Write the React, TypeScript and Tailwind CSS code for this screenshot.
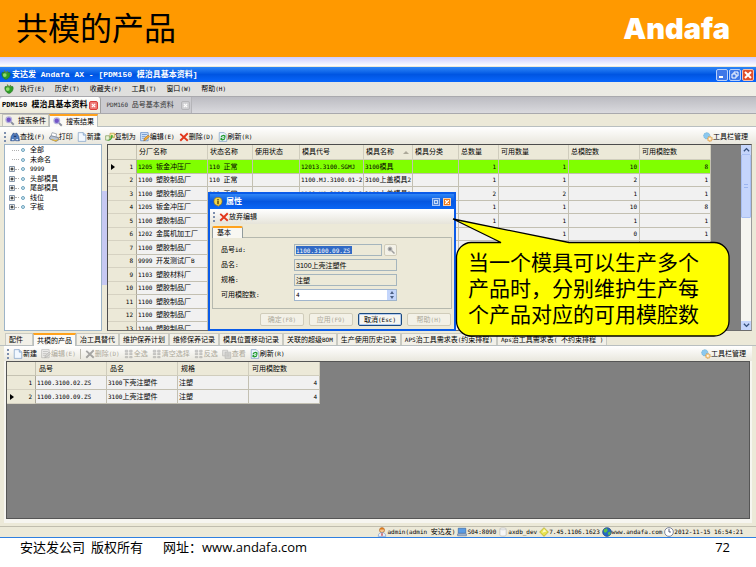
import React from 'react';

const latinSizes = {
  small: "font-['DejaVu_Sans_Mono',monospace] text-[6px]",
  tab: "font-['Liberation_Mono',monospace] text-[7px]",
  title: "font-['Liberation_Mono',monospace] text-[8px]",
};

/** Text that mixes Chinese with half-width Latin characters. */
function T({ children, latin = 'small' }: { children: string; latin?: keyof typeof latinSizes }) {
  const parts = children.split(/([\x20-\x7e]+)/).filter(Boolean);
  return (
    <span className="whitespace-pre">
      {parts.map((p, i) =>
        /^[\x20-\x7e]+$/.test(p) ? (
          <span key={i} className={latinSizes[latin]}>{p}</span>
        ) : (
          p
        ),
      )}
    </span>
  );
}

type IconName =
  | 'apple' | 'search' | 'find' | 'print' | 'page' | 'copy' | 'edit' | 'delete' | 'refresh'
  | 'gear' | 'grid' | 'sheets' | 'user' | 'pc' | 'db' | 'diamond' | 'globe' | 'clock' | 'info';

const drawings: Record<IconName, React.ReactNode> = {
  apple: (
    <>
      <path d="M2 4h12c2 4-1 10-6 11C3 14 0 8 2 4z" fill="#2e9e28" stroke="#2a6f26" />
      <path d="M5 1l3 4 3-3" stroke="#5b8f3a" strokeWidth="2" fill="none" />
      <ellipse cx="6" cy="8" rx="3" ry="3" fill="#8fdc6c" />
    </>
  ),
  search: (
    <>
      <path d="M9 9l5 5" stroke="#8a8f9c" strokeWidth="3" />
      <circle cx="6" cy="6" r="4.5" fill="#7355c8" stroke="#b4b2dd" strokeWidth="2" />
    </>
  ),
  find: (
    <>
      <path d="M1 14l1-7 3-5h2v12zM9 14V2h2l3 5 1 7z" fill="#4d7fc4" stroke="#1d3c78" />
      <path d="M6 7h4" stroke="#1d3c78" strokeWidth="2" />
      <path d="M3 12h3M10 12h3" stroke="#d8e8ff" strokeWidth="2" />
    </>
  ),
  print: (
    <>
      <path d="M5 1l7 2-1 6-8-2z" fill="#fff" stroke="#7c8796" />
      <path d="M1 8l3-2 11 3v4l-4 2-10-4z" fill="#b7c3d4" stroke="#56647a" />
      <path d="M4 12l7 2 3-2" stroke="#e0b13a" strokeWidth="2" fill="none" />
    </>
  ),
  page: (
    <>
      <path d="M2 1h8l4 4v10H2z" fill="#f2f8ff" stroke="#6f93bf" />
      <path d="M10 1v4h4" fill="#c9dcf4" stroke="#6f93bf" />
    </>
  ),
  copy: (
    <>
      <path d="M1 6h6v7H1z" fill="#eaf3d8" stroke="#6f8f45" />
      <path d="M8 2h7v7H8z" fill="#fff4b8" stroke="#b08b28" />
      <path d="M3 13c3 0 6-2 7-6l-2 1 3-4 3 4-2-1c-1 5-4 8-9 6z" fill="#3fa834" />
    </>
  ),
  edit: (
    <>
      <path d="M1 1h12v13H1z" fill="#dbe9fb" stroke="#3d74bd" />
      <path d="M3 4h8M3 7h6M3 10h4" stroke="#3d74bd" />
      <path d="M6 14l1-4 6-5 2 2-6 6z" fill="#f2b33a" stroke="#a4621c" />
    </>
  ),
  delete: <path d="M2 3l12 11M14 2L2 14" stroke="#e2371c" strokeWidth="3" fill="none" />,
  refresh: (
    <>
      <path d="M2 1h8l4 4v10H2z" fill="#eef6ff" stroke="#6f93bf" />
      <path d="M5 8c1-3 5-3 6-1M11 10c-1 3-5 3-6 1" stroke="#1f9a2c" strokeWidth="2" fill="none" />
      <path d="M12 5v4H8zM4 13V9h4z" fill="#1f9a2c" />
    </>
  ),
  gear: (
    <>
      <circle cx="6" cy="6" r="5" fill="#8cc8ee" stroke="#5ba6d2" strokeDasharray="2 1" />
      <circle cx="11" cy="11" r="4" fill="#f3c887" stroke="#cf8d35" strokeDasharray="2 1" />
      <circle cx="11" cy="11" r="1.5" fill="#fff" />
    </>
  ),
  grid: (
    <path
      d="M2 2h4v3H2zM9 2h4v3H9zM2 7h4v2H2zM9 7h4v2H9zM2 12h4v2H2zM9 12h4v2H9z"
      fill="#a8a8a8"
      stroke="#777"
    />
  ),
  sheets: (
    <>
      <path d="M1 2h8v9H1z" fill="#d0d0d0" stroke="#777" />
      <path d="M5 5h9v10H5z" fill="#bbb" stroke="#777" />
      <path d="M7 8h5M7 11h5" stroke="#777" />
    </>
  ),
  user: (
    <>
      <circle cx="8" cy="5" r="4" fill="#f6c690" stroke="#a0561c" />
      <path d="M4 4c1-4 7-4 8 0z" fill="#d9791c" />
      <path d="M2 15c0-5 3-6 6-6s6 1 6 6z" fill="#e9f0fb" stroke="#6f8fc2" />
      <path d="M8 10v4" stroke="#c33" strokeWidth="2" />
    </>
  ),
  pc: (
    <>
      <path d="M2 2h12v8H2z" fill="#5a9be4" stroke="#31609c" />
      <path d="M1 11h14v3H1z" fill="#b9c8dc" stroke="#4d6c96" />
    </>
  ),
  db: (
    <>
      <path d="M3 3c0-2 10-2 10 0v10c0 2-10 2-10 0z" fill="#f7f7f7" stroke="#b4b4b4" />
      <path d="M3 3c0 2 10 2 10 0" stroke="#c4c4c4" />
    </>
  ),
  diamond: (
    <>
      <path d="M8 1l7 7-7 7-7-7z" fill="#e8e24e" stroke="#a69d1b" />
      <path d="M8 3l4 4-7 2z" fill="#fbfac0" />
    </>
  ),
  globe: (
    <>
      <circle cx="8" cy="8" r="7" fill="#2569c4" stroke="#173f7c" />
      <path d="M3 4l5-2 1 4-3 3-3-1zM9 9l4-2 1 3-3 4z" fill="#5cc046" />
    </>
  ),
  clock: (
    <>
      <circle cx="8" cy="8" r="7" fill="#fff" stroke="#77809a" strokeWidth="1.5" />
      <path d="M8 3v5h3" stroke="#4a5270" strokeWidth="1.5" fill="none" />
    </>
  ),
  info: (
    <>
      <circle cx="8" cy="7" r="6.5" fill="#f2d54b" stroke="#8d6b0d" />
      <path d="M7 11l1 5 3-5z" fill="#e0b72c" />
      <path d="M8 3v2M8 6v5" stroke="#3c3104" strokeWidth="2" />
    </>
  ),
};

function Icon({ name, off = false }: { name: IconName; off?: boolean }) {
  return (
    <svg
      viewBox="0 0 16 16"
      aria-hidden="true"
      className={off ? 'size-[10px] shrink-0 opacity-50 grayscale' : 'size-[10px] shrink-0'}
      fill="none"
    >
      {drawings[name]}
    </svg>
  );
}

function ToolButton({ icon, label, off = false }: { icon: IconName; label: string; off?: boolean }) {
  return (
    <button
      disabled={off}
      className={off ? 'flex items-center text-[#aca899]' : 'flex items-center text-black'}
    >
      <Icon name={icon} off={off} />
      <T>{label}</T>
    </button>
  );
}

function Grip() {
  return <span className="h-[10px] w-0 shrink-0 border-l-2 border-dotted border-[#7d8fae]" />;
}

const menus = ['执行(E)', '历史(T)', '收藏夹(F)', '工具(T)', '窗口(W)', '帮助(H)'];

const treeItems: { label: string; open: boolean }[] = [
  { label: '全部', open: false },
  { label: '未命名', open: false },
  { label: '9999', open: true },
  { label: '头部模具', open: true },
  { label: '尾部模具', open: true },
  { label: '线位', open: true },
  { label: '字板', open: true },
];

const moldHeads = ['分厂名称', '状态名称', '使用状态', '模具代号', '模具名称', '模具分类', '总数量', '可用数量', '总模腔数', '可用模腔数'];

const P = '1100 塑胶制品厂';
const moldRows: string[][] = [
  ['1205 钣金冲压厂', '110 正常', '', '12013.3100.SGMJ', '3100模具', '', '1', '1', '10', '8'],
  [P, '110 正常', '', '1100.MJ.3100.01-2', '3100上盖模具2', '', '1', '1', '2', '1'],
  [P, '110 正常', '', '1100.MJ.3100.01-2', '3100上盖模具2', '', '2', '2', '1', '1'],
  ['1205 钣金冲压厂', '', '', '', '', '', '1', '1', '10', '8'],
  [P, '', '', '', '', '', '1', '1', '1', '1'],
  ['1202 金属机加工厂', '', '', '', '', '', '1', '1', '0', '1'],
  [P, '', '', '', '', '', '', '', '', ''],
  ['9999 开发测试厂B', '', '', '', '', '', '', '', '', ''],
  ['1103 塑胶材料厂', '', '', '', '', '', '', '', '', ''],
  [P, '', '', '', '', '', '', '', '', ''],
  [P, '', '', '', '', '', '', '', '', ''],
  [P, '', '', '', '', '', '', '', '', ''],
  [P, '', '', '', '', '', '', '', '', ''],
];

const lowerTabs = [
  '配件', '共模的产品', '冶工具替代', '维护保养计划', '维修保养记录', '模具位置移动记录',
  '关联的超级BOM', '生产使用历史记录', 'APS治工具需求表(约束排程)', 'Aps治工具需求表( 不约束排程 )',
];

const statusItems: { icon: IconName; label: string }[] = [
  { icon: 'user', label: 'admin(admin 安达发)' },
  { icon: 'pc', label: 'S04:8090' },
  { icon: 'db', label: 'axdb_dev' },
  { icon: 'diamond', label: '7.45.1106.1623' },
  { icon: 'globe', label: 'www.andafa.com' },
  { icon: 'clock', label: '2012-11-15 16:54:21' },
];

function RowHead({ n, current }: { n: number; current: boolean }) {
  return (
    <th scope="row" className="border-r border-b border-r-[#aca899] border-b-[#d6d2c2] bg-[#ece9d8] p-0 font-normal">
      <span className="flex items-center justify-between pr-[3px] pl-[3px]">
        <span className={current ? 'h-[6px] w-0 border-y-[3px] border-l-[4px] border-y-transparent border-l-black' : 'w-0'} />
        <T>{String(n)}</T>
      </span>
    </th>
  );
}

function MoldTable() {
  return (
    <table className="w-[603px] shrink-0 table-fixed border-separate border-spacing-0 self-start text-left">
      <colgroup>
        <col className="w-[29px]" />
        <col className="w-[71px]" />
        <col className="w-[45px]" />
        <col className="w-[47px]" />
        <col className="w-[64px]" />
        <col className="w-[49px]" />
        <col className="w-[46px]" />
        <col className="w-[40px]" />
        <col className="w-[70px]" />
        <col className="w-[71px]" />
        <col className="w-[71px]" />
      </colgroup>
      <thead>
        <tr className="h-[15px] bg-[#ece9d8]">
          <th className="border-r border-b border-[#c5c2b2] p-0" />
          {moldHeads.map((h) => (
            <th key={h} className="border-r border-b border-[#d0cdbd] p-0 pl-[2px] font-normal">
              <span className="flex items-center justify-between pr-[3px]">
                {h}
                {h === '模具名称' && (
                  <span className="border-x-[3px] border-b-[3px] border-x-transparent border-b-[#aca899]" />
                )}
              </span>
            </th>
          ))}
        </tr>
      </thead>
      <tbody>
        {moldRows.map((r, i) => (
          <tr key={i} className={i === 0 ? 'h-[14px] bg-[#80ff00]' : 'h-[13px] bg-[#f1f1f1] odd:h-[14px]'}>
            <RowHead n={i + 1} current={i === 0} />
            {r.map((c, j) => (
              <td
                key={j}
                className={
                  j > 5
                    ? 'border-r border-b border-[#c3c0b2] p-0 pr-[2px] text-right'
                    : 'border-r border-b border-[#c3c0b2] p-0 pl-px whitespace-nowrap'
                }
              >
                <T>{c}</T>
              </td>
            ))}
          </tr>
        ))}
      </tbody>
    </table>
  );
}

function ProductTable() {
  const rows = [
    ['1100.3100.02.ZS', '3100下壳注塑件', '注塑', '4'],
    ['1100.3100.09.ZS', '3100上壳注塑件', '注塑', '4'],
  ];
  return (
    <table className="w-[313px] table-fixed border-separate border-spacing-0 text-left">
      <colgroup>
        <col className="w-[29px]" />
        <col className="w-[71px]" />
        <col className="w-[71px]" />
        <col className="w-[71px]" />
        <col className="w-[71px]" />
      </colgroup>
      <thead>
        <tr className="h-[14px] bg-[#ece9d8]">
          <th className="border-r border-b border-[#c5c2b2] p-0" />
          {['品号', '品名', '规格', '可用模腔数'].map((h) => (
            <th key={h} className="border-r border-b border-[#d0cdbd] p-0 pl-[3px] font-normal">{h}</th>
          ))}
        </tr>
      </thead>
      <tbody>
        {rows.map((r, i) => (
          <tr key={i} className="h-[14px] bg-[#f1f1f1]">
            <RowHead n={i + 1} current={i === 1} />
            {r.map((c, j) => (
              <td
                key={j}
                className={
                  j === 3
                    ? 'border-r border-b border-[#c3c0b2] p-0 pr-[2px] text-right'
                    : 'border-r border-b border-[#c3c0b2] p-0 pl-px'
                }
              >
                <T>{c}</T>
              </td>
            ))}
          </tr>
        ))}
      </tbody>
    </table>
  );
}

function DialogButton({ label, active = false }: { label: string; active?: boolean }) {
  return (
    <button
      disabled={!active}
      className={
        active
          ? 'h-[13px] w-11 rounded-[2px] border border-[#1c4a80] bg-[#f6f5f0] text-black shadow-[inset_0_0_0_1px_#b5cdf0]'
          : 'h-[13px] w-11 rounded-[2px] border border-[#d0ccba] bg-[#f3f1e7] text-[#aca899]'
      }
    >
      <T>{label}</T>
    </button>
  );
}

function PropertyDialog() {
  return (
    <section
      aria-label="属性"
      className="absolute top-[126px] left-[208px] flex w-[248px] flex-col border-2 border-[#0a5be8] bg-[#ece9d8]"
    >
      <header className="flex h-[15px] items-center gap-[3px] bg-linear-to-b from-[#2f86f6] via-[#0556e0] to-[#0a66f5] px-[3px] text-[8px] font-bold text-white">
        <Icon name="info" />
        <span className="flex-1">属性</span>
        <button aria-label="最大化" className="grid size-2 place-items-center border border-[#a9c6f5] bg-[#4a83dc]">
          <span className="size-1 border border-[#c7dcfb]" />
        </button>
        <button aria-label="关闭" className="grid size-2 place-items-center border border-[#fbd0a8] bg-[#ee7a1c]">
          <svg viewBox="0 0 6 6" className="size-1"><path d="M0 0l6 6M6 0L0 6" stroke="#fff" strokeWidth="2" /></svg>
        </button>
      </header>
      <div className="flex h-[15px] items-center gap-1 bg-linear-to-b from-white to-[#e6e4da] px-[3px]">
        <Grip />
        <ToolButton icon="delete" label="放弃编辑" />
      </div>
      <div className="px-[2px] pt-[2px]">
        <button className="relative z-10 -mb-px block h-3 w-[31px] rounded-t-[2px] border border-t-2 border-b-0 border-[#919b9c] border-t-[#ffa21c] bg-[#f8f7f2] pl-1 text-left">
          基本
        </button>
        <div className="flex h-[72px] flex-col gap-[3px] border border-[#b5b8ae] px-2 pt-[6px]">
          <div className="flex h-3 items-center">
            <label htmlFor="pid" className="w-[73px]"><T>品号id:</T></label>
            <input
              id="pid"
              readOnly
              defaultValue="1100.3100.09.ZS"
              className="h-3 w-[88px] border border-[#a5b5bd] bg-[#ece9d8] bg-[linear-gradient(#316ac5,#316ac5)] bg-[length:56px_8px] bg-[position:1px_1px] bg-no-repeat pl-px font-['DejaVu_Sans_Mono',monospace] text-[6px] text-white outline-none"
            />
            <button aria-label="查找品号" className="ml-[2px] grid h-3 w-[13px] place-items-center rounded-[2px] border border-[#d0ccba] bg-[#f3f1e7]">
              <svg viewBox="0 0 16 16" className="size-2"><path d="M9 9l6 6" stroke="#a0a0a0" strokeWidth="3" /><circle cx="6" cy="6" r="4" fill="#888" stroke="#b8b8b8" strokeWidth="2" /></svg>
            </button>
          </div>
          <div className="flex h-3 items-center">
            <label htmlFor="pname" className="w-[73px]"><T>品名:</T></label>
            <input id="pname" readOnly defaultValue="3100上壳注塑件" className="h-3 w-[103px] border border-[#a5b5bd] bg-[#ece9d8] pl-px outline-none" />
          </div>
          <div className="flex h-3 items-center">
            <label htmlFor="pspec" className="w-[73px]"><T>规格:</T></label>
            <input id="pspec" readOnly defaultValue="注塑" className="h-3 w-[103px] border border-[#a5b5bd] bg-[#ece9d8] pl-px outline-none" />
          </div>
          <div className="flex h-3 items-center">
            <label htmlFor="pcount" className="w-[73px]"><T>可用模腔数:</T></label>
            <span className="flex h-3 w-[103px] border border-[#9fb4cc] bg-white">
              <input id="pcount" defaultValue="4" className="w-0 flex-1 bg-white pl-px font-['DejaVu_Sans_Mono',monospace] text-[6px] outline-none" />
              <span className="flex w-[9px] flex-col items-center justify-center gap-[2px] bg-[#c3d5fb]">
                <button aria-label="增加" className="border-x-[2px] border-b-[3px] border-x-transparent border-b-[#4d6185]" />
                <button aria-label="减少" className="border-x-[2px] border-t-[3px] border-x-transparent border-t-[#4d6185]" />
              </span>
            </span>
          </div>
        </div>
      </div>
      <footer className="flex justify-end gap-[5px] px-[3px] pt-[4px] pb-[3px]">
        <DialogButton label="确定(F8)" />
        <DialogButton label="应用(F9)" />
        <DialogButton label="取消(Esc)" active />
        <DialogButton label="帮助(H)" />
      </footer>
    </section>
  );
}

function Callout() {
  return (
    <aside className="absolute top-[152px] left-[452px] h-[120px] w-[279px] text-black">
      <svg viewBox="0 0 279 120" className="absolute inset-0 size-full" aria-hidden="true">
        <path
          d="M1 1L49 24.500H19A15 15 0 0 0 4.500 39V103A15 15 0 0 0 19 118H262A15 15 0 0 0 277 103V39A15 15 0 0 0 262 24.500H117Z"
          fill="#ffff00"
          stroke="#000"
          strokeWidth="1.300"
        />
      </svg>
      <p className="relative pt-8 pl-4 text-[21px] leading-[26px] whitespace-nowrap">
        当一个模具可以生产多个
        <br />
        产品时，分别维护生产每
        <br />
        个产品对应的可用模腔数
      </p>
    </aside>
  );
}

function WindowControls() {
  return (
    <div className="flex gap-px">
      <button aria-label="最小化" className="flex size-3 items-end rounded-[2px] border border-[#b9d0fa] bg-[#3f78e8] p-[2px]">
        <span className="h-[2px] w-1 bg-white" />
      </button>
      <button aria-label="还原" className="grid size-3 place-items-center rounded-[2px] border border-[#b9d0fa] bg-[#3f78e8]">
        <svg viewBox="0 0 8 8" className="size-2" fill="none" stroke="#fff"><path d="M3 3V1h4v4H5M1 3h4v4H1z" /></svg>
      </button>
      <button aria-label="关闭" className="grid size-3 place-items-center rounded-[2px] border border-[#f3c0b0] bg-[#e0502c]">
        <svg viewBox="0 0 8 8" className="size-2" stroke="#fff" strokeWidth="2"><path d="M1 1l6 6M7 1L1 7" /></svg>
      </button>
    </div>
  );
}

function CloseMark({ active }: { active: boolean }) {
  return (
    <button
      aria-label="关闭标签"
      className={
        active
          ? 'grid size-[9px] place-items-center rounded-[2px] border border-[#d8403c] bg-[#ee7a76]'
          : 'grid size-[9px] place-items-center rounded-[2px] border border-[#b5b5b8] bg-[#cfcfd2]'
      }
    >
      <svg viewBox="0 0 6 6" className="size-[5px]" stroke="#fff" strokeWidth="1.500"><path d="M1 1l4 4M5 1L1 5" /></svg>
    </button>
  );
}

function AppWindow() {
  return (
    <section className="relative flex flex-1 flex-col bg-[#ece9d8] text-[7px] leading-[10px] text-black">
      <header className="mt-px flex h-[15px] items-center gap-px bg-linear-to-b from-[#2d86f8] via-[#0055e2] to-[#0a66fb] pr-[2px] pl-px font-bold text-white">
        <Icon name="apple" />
        <h2 className="flex-1 text-[8px]"><T latin="title">安达发 Andafa AX - [PDM150 模治具基本资料]</T></h2>
        <WindowControls />
      </header>

      <nav className="flex h-[14px] items-center gap-[10px] bg-linear-to-r from-[#dcdcdc] to-[#f0efe6] pl-1">
        <Icon name="apple" />
        {menus.map((m) => (
          <button key={m} className="first-of-type:-ml-1"><T>{m}</T></button>
        ))}
      </nav>

      <div className="flex h-[18px] items-stretch border-y border-[#a9a9ad] bg-linear-to-b from-[#bcbcc2] to-[#dadade]">
        <div className="flex items-center gap-[2px] rounded-t-[3px] border-r border-[#a0a0a0] bg-linear-to-b from-white to-[#ece9d8] px-[2px] text-[8px] font-bold">
          <button><T latin="tab">PDM150 模治具基本资料</T></button>
          <CloseMark active />
        </div>
        <div className="flex items-center gap-[7px] border-r border-[#b5b5b9] bg-[#cbcbd0] pr-px pl-[5px] text-[#333]">
          <button><T>PDM160 品号基本资料</T></button>
          <CloseMark active={false} />
        </div>
      </div>

      <div className="flex h-[13px] items-end border-b border-[#b9bfc0] pl-[2px]">
        <button className="flex h-3 items-center gap-[3px] border-x border-t border-[#c4c4ba] bg-[#f2f0e6] px-[2px]">
          <Icon name="search" />
          搜索条件
        </button>
        <button className="-mb-px flex h-[13px] items-center gap-[3px] border-x border-t-2 border-[#b9bfc0] border-t-[#ffa21c] bg-[#fbfaf7] px-[3px]">
          <Icon name="search" />
          搜索结果
        </button>
      </div>

      <div className="flex h-[17px] items-center gap-1 bg-linear-to-b from-white to-[#e9e7dd] pt-[2px] pr-2 pl-1">
        <Grip />
        <ToolButton icon="find" label="查找(F)" />
        <ToolButton icon="print" label="打印" />
        <ToolButton icon="page" label="新建" />
        <ToolButton icon="copy" label="复制为" />
        <ToolButton icon="edit" label="编辑(E)" />
        <ToolButton icon="delete" label="删除(D)" />
        <ToolButton icon="refresh" label="刷新(R)" />
        <span className="flex-1" />
        <ToolButton icon="gear" label="工具栏管理" />
      </div>

      <div className="flex h-[187px] pr-1 pl-1">
        <ul className="w-[98px] border border-[#9db4c8] bg-white">
          {treeItems.map((t) => (
            <li key={t.label} className="flex h-[9px] items-center odd:h-[10px]">
              <span className="flex w-[14px] items-center justify-end">
                {t.open ? (
                  <>
                    <svg viewBox="0 0 6 6" className="size-[6px]"><path d="M.5.5h5v5h-5z" fill="#f4f4f0" stroke="#8797ab" /><path d="M1.500 3h3M3 1.500v3" stroke="#111" /></svg>
                    <span className="w-1 border-t border-dotted border-[#b0b0b0]" />
                  </>
                ) : (
                  <span className="w-[7px] border-t border-dotted border-[#b0b0b0]" />
                )}
              </span>
              <span className="mr-[5px] ml-[2px] size-[4px] rounded-full border border-[#6fa3bd] bg-[#cfe8f2]" />
              <T>{t.label}</T>
            </li>
          ))}
        </ul>
        <div className="flex w-[5px] flex-col justify-center">
          <span className="h-[94px] bg-[#c6c8f2]" />
        </div>
        <div className="flex min-w-0 flex-1 overflow-hidden border border-t-[#4c4c4c] border-r-[#9b9b9b] border-b-[#6c6c6c] border-l-[#4c4c4c] bg-[#808080]">
          <MoldTable />
          <span className="flex-1" />
          <div className="flex w-[10px] flex-col justify-between bg-[#f5f5f1]">
            <div>
              <button aria-label="向上滚动" className="grid h-[9px] w-full place-items-center bg-[#c5d5fc]">
                <svg viewBox="0 0 8 8" className="size-[7px]" fill="none" stroke="#35507e" strokeWidth="1.500"><path d="M1 6l3-3 3 3" /></svg>
              </button>
              <div className="grid h-16 place-items-center rounded-[1px] border border-[#a9c0f4] bg-[#c5d5fc]">
                <span className="h-[4px] w-[4px] border-y border-[#9bb4ef]" />
              </div>
            </div>
            <button aria-label="向下滚动" className="grid h-[9px] w-full place-items-center bg-[#c5d5fc]">
              <svg viewBox="0 0 8 8" className="size-[7px]" fill="none" stroke="#35507e" strokeWidth="1.500"><path d="M1 2l3 3 3-3" /></svg>
            </button>
          </div>
        </div>
      </div>

      <div className="mt-[2px] flex h-[13px] items-end border-b border-[#b9bfc0] pl-[5px]">
        {lowerTabs.map((t, i) => (
          <button
            key={t}
            className={
              i === 1
                ? '-mb-px h-[13px] border-x border-t-2 border-[#b9bfc0] border-t-[#ffa21c] bg-[#fbfaf7] px-[3px]'
                : 'h-3 border-x border-t border-[#c9cac2] bg-[#f2f0e8] px-[3px] first:w-7 first:text-left'
            }
          >
            <T>{t}</T>
          </button>
        ))}
      </div>

      <div className="mx-1 flex h-[15px] items-center gap-1 bg-linear-to-b from-white to-[#e9e7dd] pr-[6px] pl-[3px]">
        <Grip />
        <ToolButton icon="page" label="新建" />
        <ToolButton icon="edit" label="编辑(E)" off />
        <span className="h-[10px] border-l border-[#bdbbb0]" />
        <ToolButton icon="delete" label="删除(D)" off />
        <ToolButton icon="grid" label="全选" off />
        <ToolButton icon="grid" label="清空选择" off />
        <ToolButton icon="grid" label="反选" off />
        <ToolButton icon="sheets" label="查看" off />
        <ToolButton icon="refresh" label="刷新(R)" />
        <span className="flex-1" />
        <ToolButton icon="gear" label="工具栏管理" />
      </div>

      <div className="mr-1 ml-1 flex flex-1 flex-col border-x-2 border-b-4 border-[#f6f5f0]">
        <div className="flex-1 border border-[#555] bg-[#808080]">
          <ProductTable />
        </div>
      </div>

      <footer className="mt-[3px] flex h-[11px] items-center justify-end gap-[2px] border-t border-[#c0bdae] pr-[13px]">
        {statusItems.map((s) => (
          <span key={s.label} className="flex items-center">
            <Icon name={s.icon} />
            <T>{s.label}</T>
          </span>
        ))}
      </footer>
      <div className="h-px bg-[#2f7fe0]" />

      <PropertyDialog />
      <Callout />
    </section>
  );
}

export default function App() {
  return (
    <main className="flex min-h-screen flex-col bg-white font-['Liberation_Sans','Noto_Sans_CJK_SC',sans-serif]">
      <header className="flex h-[57px] items-center justify-between bg-[#ff9900] pr-[26px] pl-4">
        <h1 className="text-[32px] leading-[40px] text-black">共模的产品</h1>
        <span className="font-['Inter',sans-serif] text-[29px] leading-[40px] font-black text-white">Andafa</span>
      </header>
      <div className="h-[9px] bg-linear-to-b from-[#ccccff] to-white" />
      <AppWindow />
      <footer className="flex h-[29px] items-start pt-px pr-[26px] pl-5 font-['Open_Sans','Noto_Sans_CJK_SC',sans-serif] text-[13px] leading-[16px] text-black">
        <span>安达发公司</span>
        <span className="ml-[6px]">版权所有</span>
        <span className="ml-5 flex-1">网址：<a href="#site">www.andafa.com</a></span>
        <span>72</span>
      </footer>
    </main>
  );
}
